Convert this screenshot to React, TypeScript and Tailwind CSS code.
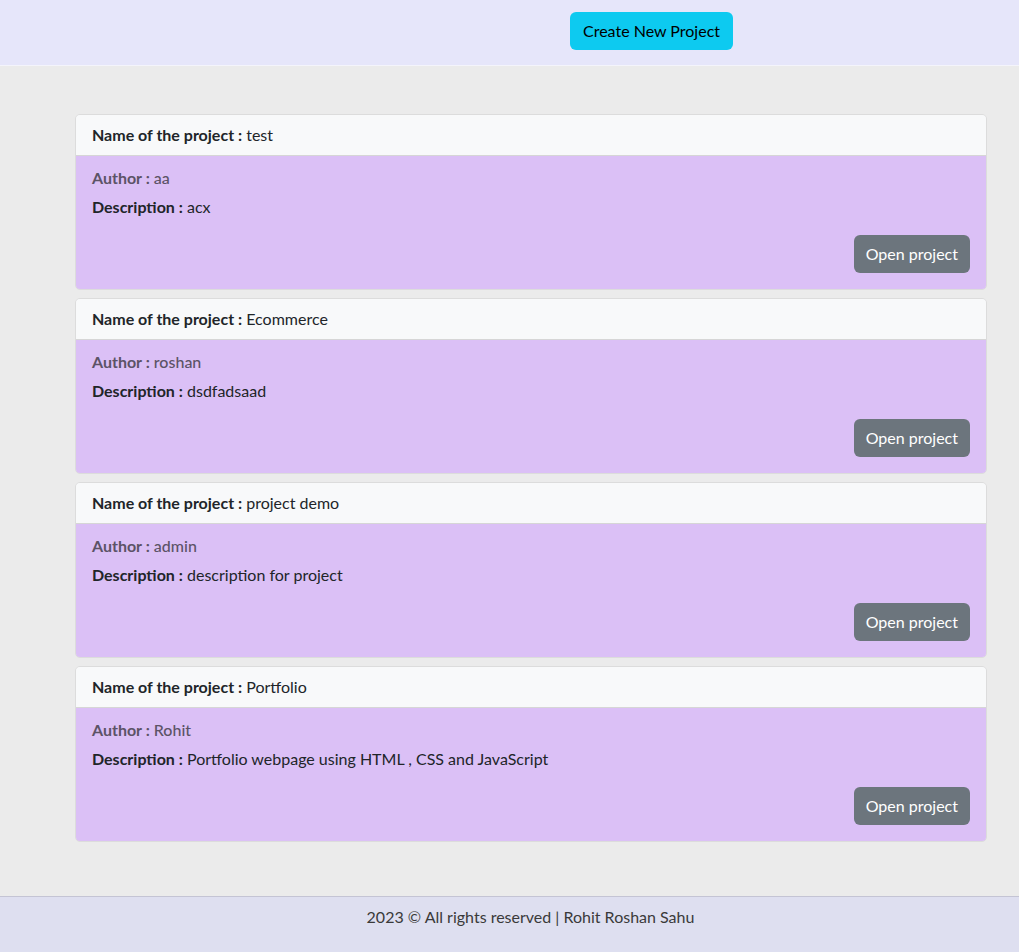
const projects = [
  { name: "test", author: "aa", description: "acx" },
  { name: "Ecommerce", author: "roshan", description: "dsdfadsaad" },
  { name: "project demo", author: "admin", description: "description for project" },
  {
    name: "Portfolio",
    author: "Rohit",
    description: "Portfolio webpage using HTML , CSS and JavaScript",
  },
];

type Project = { name: string; author: string; description: string };

const ProjectCard = ({ project }: { project: Project }) => {
  return (
    <div className="border border-[#dcdcdc] rounded-[5px] overflow-hidden">
      <div className="bg-[#f8f9fa] border-b border-[#d6d6d6] h-[41px] px-4 flex items-center text-[#212529]">
        <span className="font-bold">Name of the project :</span>
        <span>&nbsp;{project.name}</span>
      </div>
      <div className="bg-[#dbc0f6] px-4 pt-3 pb-4 flex flex-col">
        <h6 className="text-[#5c5366] font-medium leading-[19px] mb-2">
          <span className="font-bold">Author :</span> {project.author}
        </h6>
        <p className="text-[#212529] leading-6 mb-4">
          <span className="font-bold">Description :</span> {project.description}
        </p>
        <div className="flex justify-end">
          <button
            type="button"
            className="bg-[#6c757d] text-white h-[38px] px-3 rounded-[6px] leading-6"
          >
            Open project
          </button>
        </div>
      </div>
    </div>
  );
};

export default function App() {
  return (
    <div
      className="min-h-[952px] flex flex-col bg-[#ebebeb] text-base"
      style={{ fontFamily: '"Segoe UI", Lato, "Liberation Sans", sans-serif' }}
    >
      <header className="h-[66px] bg-[#e6e6fa] border-b border-[#f4f4fb] flex items-start pt-3 pl-[570px]">
        <button
          type="button"
          className="bg-[#0dcaf0] text-black h-[38px] px-[13px] rounded-[6px] leading-6"
        >
          Create New Project
        </button>
      </header>
      <main className="flex-1 pt-[48px] pb-[54px] pl-[75px] pr-[32px]">
        <div className="flex flex-col gap-2">
          {projects.map((p) => (
            <ProjectCard key={p.name} project={p} />
          ))}
        </div>
      </main>
      <footer className="h-[56px] bg-[#dedff0] border-t border-[#c4c4d4] flex items-start justify-center pt-2 pl-[42px] leading-6 text-[#3a3a3a]">
        2023 © All rights reserved | Rohit Roshan Sahu
      </footer>
    </div>
  );
}
